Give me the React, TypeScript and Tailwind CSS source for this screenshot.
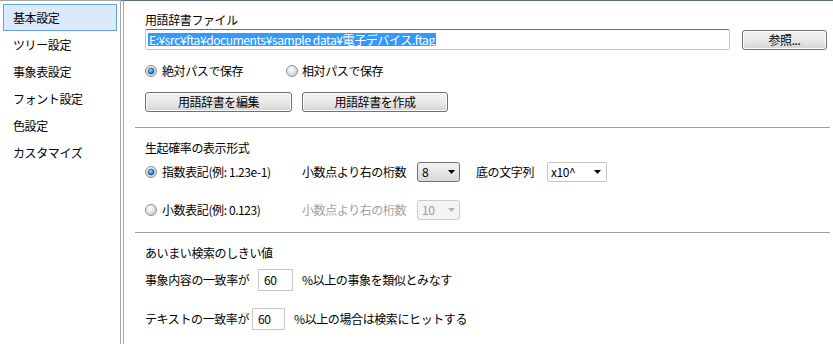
import React from 'react'

const font = { fontFamily: '"Noto Sans CJK JP", "Noto Sans", sans-serif' }

function Radio({ checked }: { checked?: boolean }) {
    return (
        <svg width="12" height="12" viewBox="0 0 12 12" className="shrink-0">
            <defs>
                <radialGradient id={checked ? 'rc' : 'ru'} cx="40%" cy="35%" r="70%">
                    <stop offset="0%" stopColor="#ffffff" />
                    <stop offset="100%" stopColor="#c9c9c9" />
                </radialGradient>
                <radialGradient id="dot" cx="40%" cy="35%" r="70%">
                    <stop offset="0%" stopColor="#9fdcff" />
                    <stop offset="60%" stopColor="#2a8ae0" />
                    <stop offset="100%" stopColor="#1a4f8c" />
                </radialGradient>
            </defs>
            <circle cx="6" cy="6" r="5.5" fill={`url(#${checked ? 'rc' : 'ru'})`} stroke="#8e8f8f" />
            {checked && <circle cx="6" cy="6" r="3" fill="url(#dot)" stroke="#1c3f6a" strokeWidth="0.6" />}
        </svg>
    )
}

function Arrow({ disabled }: { disabled?: boolean }) {
    return (
        <svg width="7" height="4" viewBox="0 0 7 4">
            <path d="M0 0 H7 L3.5 4 Z" fill={disabled ? '#b5b5b5' : '#000'} />
        </svg>
    )
}

function Button({ label, w }: { label: string; w: string }) {
    return (
        <div className={`${w} h-[20px] flex items-center justify-center border border-[#707070] rounded-[3px] bg-linear-to-b from-[#f3f3f3] via-[#e9e9e9] to-[#d4d4d4] shadow-[inset_0_0_0_1px_#fcfcfc]`}>
            {label}
        </div>
    )
}

export default function App() {
    const items = ['基本設定', 'ツリー設定', '事象表設定', 'フォント設定', '色設定', 'カスタマイズ']
    return (
        <div className="flex w-[833px] h-[344px] bg-white text-[12px] text-black leading-[14px] tracking-[-0.4px] whitespace-nowrap overflow-hidden" style={font}>
            <div className="w-[121px] h-full border-r border-t border-[#a5a5a5] pt-[3px] px-[3px] shrink-0">
                {items.map((it, i) => (
                    <div
                        key={it}
                        className={
                            i === 0
                                ? 'h-[27px] flex items-center pl-[9px] bg-[#dbe9fb] border border-[#5ea3ec]'
                                : 'h-[27px] flex items-center pl-[10px]'
                        }
                    >
                        {it}
                    </div>
                ))}
            </div>
            <div className="w-[2px] h-full border-t border-[#5f6f80] shrink-0" />
            <div className="flex-1 h-full border-l border-[#a5a5a5] border-t border-t-[#5f6f80] flex flex-col">
                {/* dictionary file */}
                <div className="pl-[21px] pr-[5px] pt-[12px]">
                    <div className="h-[14px]">用語辞書ファイル</div>
                    <div className="flex items-center mt-[2px]">
                        <div className="w-[585px] h-[21px] border border-[#a8cdee] border-t-[#3d7bad] rounded-[2px] flex items-center px-[2px]">
                            <span className="bg-[#3399ff] text-white leading-[13px] px-[1px]">E:¥src¥fta¥documents¥sample data¥電子デバイス.ftag</span>
                        </div>
                        <div className="ml-[12px]">
                            <Button label="参照..." w="w-[85px] h-[18px]" />
                        </div>
                    </div>
                    <div className="flex items-center h-[14px] mt-[14px]">
                        <Radio checked />
                        <span className="ml-[5px] w-[124px]">絶対パスで保存</span>
                        <Radio />
                        <span className="ml-[4px]">相対パスで保存</span>
                    </div>
                    <div className="flex mt-[14px] gap-[10px]">
                        <Button label="用語辞書を編集" w="w-[147px]" />
                        <Button label="用語辞書を作成" w="w-[146px]" />
                    </div>
                </div>
                <div className="ml-[11px] mr-[3px] mt-[15px] h-px bg-[#a0a0a0]" />

                {/* probability format */}
                <div className="pl-[21px] pt-[13px]">
                    <div className="h-[14px]">生起確率の表示形式</div>
                    <div className="flex items-center h-[20px] mt-[7px]">
                        <div className="w-[157px] flex items-center shrink-0">
                            <Radio checked />
                            <span className="ml-[5px]">指数表記(例: 1.23e-1)</span>
                        </div>
                        <span className="w-[115px] shrink-0">小数点より右の桁数</span>
                        <div className="w-[43px] h-[20px] border border-[#707070] rounded-[3px] bg-linear-to-b from-[#f3f3f3] to-[#d9d9d9] flex items-center justify-between px-[4px]">
                            <span>8</span>
                            <Arrow />
                        </div>
                        <span className="ml-[16px] w-[71px] shrink-0">底の文字列</span>
                        <div className="w-[60px] h-[20px] border border-[#c5c5c5] rounded-[2px] bg-white flex items-center justify-between pl-[3px] pr-[5px]">
                            <span>x10^</span>
                            <Arrow />
                        </div>
                    </div>
                    <div className="flex items-center h-[20px] mt-[18px]">
                        <div className="w-[157px] flex items-center shrink-0">
                            <Radio />
                            <span className="ml-[5px]">小数表記(例: 0.123)</span>
                        </div>
                        <span className="w-[115px] shrink-0 text-[#a0a0a0]">小数点より右の桁数</span>
                        <div className="w-[43px] h-[20px] border border-[#cbcbcb] rounded-[3px] bg-[#f4f4f4] flex items-center justify-between px-[4px] text-[#9a9a9a]">
                            <span>10</span>
                            <Arrow disabled />
                        </div>
                    </div>
                </div>
                <div className="ml-[11px] mr-[3px] mt-[12px] h-px bg-[#a0a0a0]" />

                {/* fuzzy search */}
                <div className="pl-[21px] pt-[13px]">
                    <div className="h-[14px]">あいまい検索のしきい値</div>
                    <div className="flex items-center h-[22px] mt-[9px]">
                        <span className="w-[113px] shrink-0">事象内容の一致率が</span>
                        <div className="w-[35px] h-[22px] shrink-0 border border-[#c8c8c8] flex items-center pl-[5px]">60</div>
                        <span className="ml-[9px]">%以上の事象を類似とみなす</span>
                    </div>
                    <div className="flex items-center h-[22px] mt-[17px]">
                        <span className="w-[107px] shrink-0">テキストの一致率が</span>
                        <div className="w-[33px] h-[22px] shrink-0 border border-[#c8c8c8] flex items-center pl-[5px]">60</div>
                        <span className="ml-[9px]">%以上の場合は検索にヒットする</span>
                    </div>
                </div>
            </div>
        </div>
    )
}
